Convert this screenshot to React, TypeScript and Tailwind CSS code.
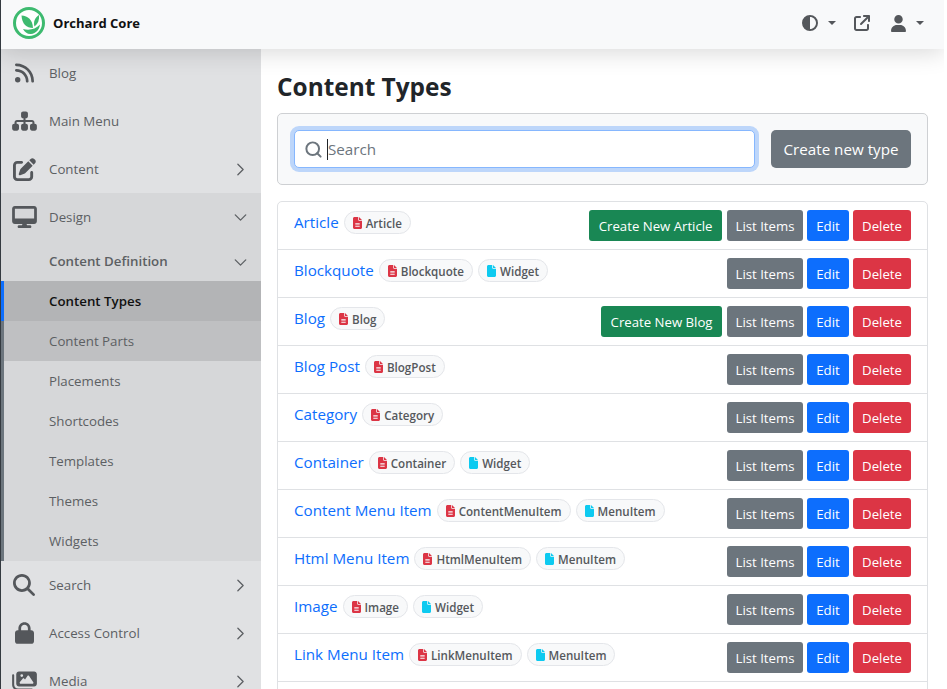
import { FaRss, FaSitemap, FaDesktop, FaMagnifyingGlass, FaLock, FaImages, FaUser, FaFileLines, FaFile, FaPenToSquare, FaCircleHalfStroke, FaArrowUpRightFromSquare } from 'react-icons/fa6'
import { ChevronDown, ChevronRight, Search } from 'lucide-react'
import type { ReactNode } from 'react'

const types = [
  { name: 'Article', stereotype: 'Article', create: 'Create New Article' },
  { name: 'Blockquote', stereotype: 'Blockquote', tag: 'Widget' },
  { name: 'Blog', stereotype: 'Blog', create: 'Create New Blog' },
  { name: 'Blog Post', stereotype: 'BlogPost' },
  { name: 'Category', stereotype: 'Category' },
  { name: 'Container', stereotype: 'Container', tag: 'Widget' },
  { name: 'Content Menu Item', stereotype: 'ContentMenuItem', tag: 'MenuItem' },
  { name: 'Html Menu Item', stereotype: 'HtmlMenuItem', tag: 'MenuItem' },
  { name: 'Image', stereotype: 'Image', tag: 'Widget' },
  { name: 'Link Menu Item', stereotype: 'LinkMenuItem', tag: 'MenuItem' },
]

const designItems = ['Placements', 'Shortcodes', 'Templates', 'Themes', 'Widgets']

function TopItem({ icon, label, arrow, open }: { icon: ReactNode; label: string; arrow?: boolean; open?: boolean }) {
  return (
    <div className={`flex h-12 shrink-0 items-center text-[#5c5f63] ${open ? 'bg-[#d6d7d9]' : ''}`}>
      <div className="flex w-[46px] shrink-0 items-center justify-center text-[#54575b]">{icon}</div>
      <span className="ml-[2px] pt-[2px] text-[13.300px]">{label}</span>
      {arrow && (
        <span className="ml-auto mr-[10px]">
          {open ? <ChevronDown className="h-[21px] w-[21px]" strokeWidth={1.5} /> : <ChevronRight className="h-[21px] w-[21px]" strokeWidth={1.5} />}
        </span>
      )}
    </div>
  )
}

function SubItem({ label, className }: { label: string; className?: string }) {
  return <div className={`flex h-10 items-center border-l-[3px] pl-[45px] pt-[2px] text-[13.300px] ${className ?? ''}`}>{label}</div>
}

function Badge({ label, tag }: { label: string; tag?: boolean }) {
  return (
    <span className="ml-[5px] inline-flex h-[23px] items-center gap-[4px] rounded-full border border-[#e4e6ea] bg-[#f8f9fa] px-[8px] text-[11.600px] font-semibold text-[#55585c]">
      {tag ? <FaFile className="h-3 w-[9px] text-[#0dcaf0]" /> : <FaFileLines className="h-3 w-[9px] text-[#dc3545]" />}
      <span className="pt-[1px]">{label}</span>
    </span>
  )
}

function Btn({ label, className }: { label: string; className: string }) {
  return <span className={`flex h-[31px] items-center justify-center rounded-[3px] pt-[2px] text-[13.200px] text-white ${className}`}>{label}</span>
}

export default function App() {
  return (
    <div className="flex h-[689px] w-[944px] flex-col overflow-hidden bg-white font-['Open_Sans','Liberation_Sans',sans-serif] text-[#212529]">
      <header className="relative z-10 flex h-[49px] shrink-0 items-center border-l border-[#343a40] bg-[#f8f9fa] pb-[3px] pl-3 pr-[20px] shadow-[0_3px_24px_rgba(0,0,0,0.16)]">
        <svg viewBox="0 0 32 32" className="h-8 w-8">
          <circle cx="16" cy="16" r="14.500" fill="#fff" stroke="#3dba6f" strokeWidth="3" />
          <path d="M8.500 8.500c6.500.5 11 4 11.500 12.500C13.500 21 9 17 8.500 8.500Z" fill="#3dba6f" />
          <path d="M26 8c.5 5-1 9-4.500 11.500C20 15 22 10.500 26 8Z" fill="#3dba6f" />
          <path d="M10 22c6 1.500 12.500.5 17-4.500-.5 5-4 9-9 9.500-3.500.3-6.500-2-8-5Z" fill="#3dba6f" />
        </svg>
        <span className="ml-2 pt-[2px] text-[13.050px] font-bold text-[#111]">Orchard Core</span>
        <div className="ml-auto flex items-center text-[#54575b]">
          <FaCircleHalfStroke className="h-4 w-4" />
          <span className="ml-[10px] h-0 w-0 border-x-[4px] border-t-[4px] border-x-transparent border-t-[#54575b]" />
          <FaArrowUpRightFromSquare className="ml-[18px] h-4 w-4" />
          <FaUser className="ml-[21px] h-[17px] w-[15px]" />
          <span className="ml-[10px] h-0 w-0 border-x-[4px] border-t-[4px] border-x-transparent border-t-[#54575b]" />
        </div>
      </header>
      <div className="flex min-h-0 flex-1">
        <aside className="flex w-[261px] shrink-0 flex-col overflow-hidden border-l border-[#343a40] bg-[#e0e1e3]">
          <TopItem icon={<FaRss className="h-[22px] w-[19px]" />} label="Blog" />
          <TopItem icon={<FaSitemap className="h-[22px] w-[25px]" />} label="Main Menu" />
          <TopItem icon={<FaPenToSquare className="h-[23px] w-[23px]" />} label="Content" arrow />
          <TopItem icon={<FaDesktop className="h-[22px] w-[25px]" />} label="Design" arrow open />
          <div className="flex shrink-0 flex-col bg-[#d6d7d9]">
            <div className="flex h-10 items-center pl-[48px] pt-[2px] text-[13.300px] font-semibold text-[#5c5f63]">
              Content Definition
              <ChevronDown className="ml-auto mr-[10px] h-[21px] w-[21px]" strokeWidth={1.5} />
            </div>
            <SubItem label="Content Types" className="border-[#0d6efd] bg-[#b3b4b6] font-semibold text-[#111]" />
            <SubItem label="Content Parts" className="border-[#6c757d] bg-[#bfc0c2] text-[#5c5f63]" />
            {designItems.map((item) => (
              <SubItem key={item} label={item} className="border-[#6c757d] text-[#5c5f63]" />
            ))}
          </div>
          <TopItem icon={<FaMagnifyingGlass className="h-[22px] w-[22px]" />} label="Search" arrow />
          <TopItem icon={<FaLock className="h-[22px] w-[19px]" />} label="Access Control" arrow />
          <TopItem icon={<FaImages className="h-[22px] w-[25px]" />} label="Media" arrow />
        </aside>
        <main className="flex min-w-0 flex-1 flex-col px-4 pt-[20px]">
          <h1 className="mb-[8px] text-[24.400px] font-bold leading-[36px] text-[#212529]">Content Types</h1>
          <div className="mb-4 flex h-[72px] shrink-0 items-center gap-4 rounded-[5px] border border-[#ced0d3] bg-[#f8f9fa] px-4">
            <div className="flex h-[38px] flex-1 items-center rounded-[5px] border border-[#86b7fe] bg-white pl-[9px] shadow-[0_0_0_4px_rgba(13,110,253,0.25)]">
              <Search className="h-[19px] w-[19px] text-[#6c757d]" strokeWidth={2.5} />
              <span className="ml-[4px] h-[21px] w-px bg-[#212529]" />
              <span className="text-[15.200px] text-[#6c757d]">Search</span>
            </div>
            <span className="flex h-[38px] w-[140px] items-center justify-center rounded-[5px] bg-[#6c757d] text-[15.200px] text-white">Create new type</span>
          </div>
          <div className="shrink-0 rounded-t-[5px] border border-[#dfe1e4]">
            {types.map((t) => (
              <div key={t.name} className="flex h-12 items-center border-b border-[#dfe1e4] px-4">
                <div className="mb-[5px] flex items-center">
                  <span className="pb-[2px] text-[15.200px] text-[#0d6efd]">{t.name}</span>
                  <Badge label={t.stereotype} />
                  {t.tag && <Badge label={t.tag} tag />}
                </div>
                <div className="ml-auto flex gap-[4px]">
                  {t.create && <Btn label={t.create} className="mr-px bg-[#198754] px-[9.500px]" />}
                  <Btn label="List Items" className="w-[76px] bg-[#6c757d]" />
                  <Btn label="Edit" className="w-[42px] bg-[#0d6efd]" />
                  <Btn label="Delete" className="w-[58px] bg-[#dc3545]" />
                </div>
              </div>
            ))}
            <div className="h-12" />
          </div>
        </main>
      </div>
    </div>
  )
}
